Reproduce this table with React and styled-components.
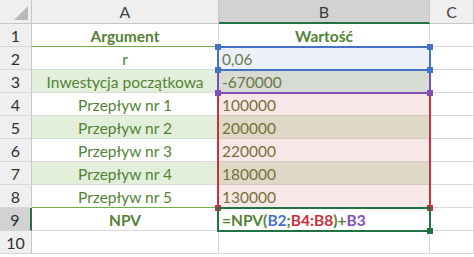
import React from "react";
import styled, { createGlobalStyle } from "styled-components";

const GlobalStyle = createGlobalStyle`
  html, body { margin: 0; padding: 0; background: #ffffff; }
  body { font-family: Lato, "Open Sans", "Liberation Sans", sans-serif; }
`;

const GREEN = "#548235";
const ROW_FILL = "#e2efda";
const GRID = "#dadada";
const ACCENT = "#217346";

const Sheet = styled.div`
  display: grid;
  grid-template-columns: 32px 187px 211px 44px;
  grid-template-rows: 24px repeat(10, 23px);
  width: 474px;
  height: 257px;
  overflow: hidden;
  font-size: 15.5px;
`;

const Corner = styled.div`
  grid-row: 1;
  grid-column: 1;
  position: relative;
  background: #efefef;
  border-right: 1px solid #c6c6c6;
  border-bottom: 1px solid #c6c6c6;
  box-sizing: border-box;
`;

const CornerTriangle = styled.svg`
  position: absolute;
  right: 3px;
  bottom: 3px;
`;

const ColHead = styled.div`
  grid-row: 1;
  grid-column: ${(p) => p.$c};
  display: flex;
  align-items: center;
  justify-content: center;
  box-sizing: border-box;
  background: ${(p) => (p.$active ? "#d2d2d2" : "#efefef")};
  color: ${(p) => (p.$active ? "#3a3a3a" : "#444444")};
  border-right: 1px solid #c6c6c6;
  border-bottom: ${(p) => (p.$active ? `2px solid ${ACCENT}` : "1px solid #c6c6c6")};
  padding-top: ${(p) => (p.$active ? "1px" : "0")};
  font-size: 16px;
`;

const RowHead = styled.div`
  grid-row: ${(p) => p.$r};
  grid-column: 1;
  display: flex;
  align-items: center;
  justify-content: center;
  box-sizing: border-box;
  padding-top: 1px;
  background: ${(p) => (p.$active ? "#d2d2d2" : "#efefef")};
  color: #2f2f2f;
  border-right: ${(p) => (p.$active ? `2px solid ${ACCENT}` : "1px solid #c6c6c6")};
  border-bottom: 1px solid #d6d6d6;
  font-size: 16px;
`;

const Cell = styled.div`
  grid-row: ${(p) => p.$r};
  grid-column: ${(p) => p.$c};
  display: flex;
  align-items: center;
  justify-content: ${(p) => (p.$center ? "center" : "flex-start")};
  box-sizing: border-box;
  padding: 1px 3px 0;
  white-space: nowrap;
  overflow: hidden;
  background: ${(p) => (p.$fill ? ROW_FILL : "#ffffff")};
  color: ${(p) => p.$color || GREEN};
  font-weight: ${(p) => (p.$bold ? 700 : 400)};
  border-right: 1px solid ${GRID};
  border-bottom: 1px solid ${(p) => (p.$rule ? "#70ad47" : GRID)};
`;

const Range = styled.div`
  grid-column: 3;
  grid-row: ${(p) => p.$rows};
  position: relative;
  margin: -1px -1px -1px -2px;
  border: 2px solid ${(p) => p.$color};
  background: ${(p) => p.$tint};
  pointer-events: none;
  z-index: ${(p) => p.$z || 1};
`;

const Handle = styled.span`
  position: absolute;
  width: 6px;
  height: 6px;
  background: ${(p) => p.$color};
  ${(p) => (p.$top ? "top: -4px;" : "bottom: -4px;")}
  ${(p) => (p.$left ? "left: -4px;" : "right: -4px;")}
`;

const Ref = styled.span`
  color: ${(p) => p.$color};
`;

const rows = [
  { n: 1, a: "Argument", b: "Wartość", bold: true, bCenter: true, rule: true },
  { n: 2, a: "r", b: "0,06" },
  { n: 3, a: "Inwestycja początkowa", b: "-670000", fill: true },
  { n: 4, a: "Przepływ nr 1", b: "100000" },
  { n: 5, a: "Przepływ nr 2", b: "200000", fill: true },
  { n: 6, a: "Przepływ nr 3", b: "220000" },
  { n: 7, a: "Przepływ nr 4", b: "180000", fill: true },
  { n: 8, a: "Przepływ nr 5", b: "130000", rule: true },
  { n: 9, a: "NPV", bold: true, formula: true },
  { n: 10, a: "", b: "", empty: true },
];

const BLUE = "#4472c4";
const RED = "#c8323c";
const PURPLE = "#7f4fb8";
const VALUE = "#6f7d3e";

function Formula() {
  return (
    <>
      =NPV(<Ref $color={BLUE}>B2</Ref>;<Ref $color={RED}>B4:B8</Ref>)+
      <Ref $color={PURPLE}>B3</Ref>
    </>
  );
}

export default function App() {
  return (
    <>
      <GlobalStyle />
      <Sheet>
        <Corner>
          <CornerTriangle width="14" height="14" viewBox="0 0 14 14">
            <polygon points="14,0 14,14 0,14" fill="#b9b9b9" />
          </CornerTriangle>
        </Corner>
        <ColHead $c={2}>A</ColHead>
        <ColHead $c={3} $active>B</ColHead>
        <ColHead $c={4}>C</ColHead>

        {rows.map((r) => {
          const gr = r.n + 1;
          return (
            <React.Fragment key={r.n}>
              <RowHead $r={gr} $active={r.n === 9}>{r.n}</RowHead>
              <Cell $r={gr} $c={2} $center $bold={r.bold} $fill={r.fill} $rule={r.rule}>
                {r.a}
              </Cell>
              <Cell
                $r={gr}
                $c={3}
                $center={r.bCenter}
                $bold={r.bold}
                $fill={r.fill}
                $color={r.bold || r.empty ? GREEN : VALUE}
              >
                {r.formula ? <Formula /> : r.b}
              </Cell>
              <Cell $r={gr} $c={4} />
            </React.Fragment>
          );
        })}

        <Range $rows="3 / 4" $color={BLUE} $tint="rgba(68,114,196,0.1)" $z={3}>
          <Handle $color={BLUE} $top $left />
          <Handle $color={BLUE} $top />
          <Handle $color={BLUE} $left />
          <Handle $color={BLUE} />
        </Range>
        <Range $rows="4 / 5" $color={PURPLE} $tint="rgba(112,48,160,0.1)" $z={2}>
          <Handle $color={PURPLE} $left />
          <Handle $color={PURPLE} />
        </Range>
        <Range $rows="5 / 10" $color={RED} $tint="rgba(192,0,0,0.09)" $z={1}>
          <Handle $color={RED} $left />
          <Handle $color={RED} />
        </Range>
        <Range $rows="10 / 11" $color={ACCENT} $tint="transparent" $z={1}>
          <Handle $color={ACCENT} />
        </Range>
      </Sheet>
    </>
  );
}
